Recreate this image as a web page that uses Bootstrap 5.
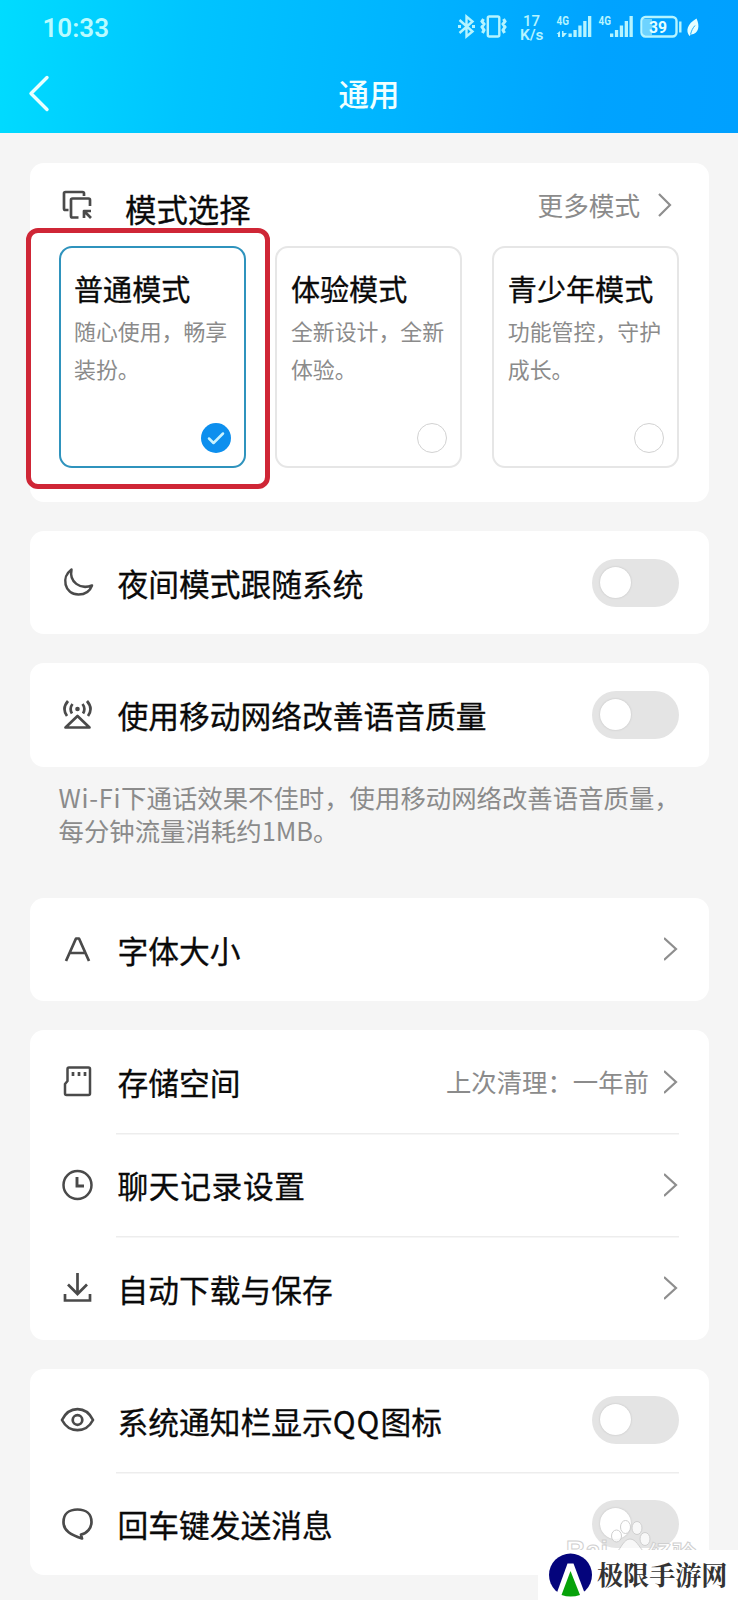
<!DOCTYPE html>
<html lang="zh-CN">
<head>
<meta charset="utf-8">
<meta name="viewport" content="width=device-width, initial-scale=1">
<title>通用</title>
<link href="https://cdn.jsdelivr.net/npm/bootstrap@5.3.0/dist/css/bootstrap.min.css" rel="stylesheet">
<style>
  body { font-family: "Noto Sans CJK SC", sans-serif; background: #f5f5f5; color: #0a0a0a; width: 738px; height: 1600px; overflow: hidden; position: relative; }
  svg { display: block; flex: none; }
  .app-head { height: 133px; background: linear-gradient(97deg, #00dcff 0%, #00c4ff 26%, #00b4ff 54%, #00a3ff 80%, #00a0ff 100%); color: #f0ffff; }
  .status-line { height: 54px; padding-left: 42.5px; padding-right: 37px; }
  .clock { font: 600 26px/54px Roboto, sans-serif; color: #b9fbff; padding-top: 1px; }
  .title-line { height: 79px; display: grid; grid-template-columns: 80px 1fr 80px; align-items: center; }
  .title-line h1 { font-size: 30.5px; line-height: 40px; font-weight: 500; margin: 0; padding-bottom: 2px; }
  .page-body { padding: 30px 29px 0 29.5px; }
  .panel { background: #fff; border: 0; border-radius: 14px; margin-bottom: 29px; padding: 0 30px 0 32px; }
  .line-item { height: 103.3px; gap: 22px; }
  .line-item .body-part { height: 100%; flex: 1; display: flex; align-items: center; font-size: 30.75px; line-height: 40px; }
  .line-item + .line-item .body-part { box-shadow: inset 0 1.5px 0 #ededed; }
  .body-part > .lbl { padding-left: 2px; padding-top: 1px; white-space: nowrap; -webkit-text-stroke: .3px; }
  .lbl.roomy { letter-spacing: .6px; }
  .hint { color: #8b8b8b; font-size: 25.4px; line-height: 33.5px; }
  .go { margin-right: 1px; }
  .toggle { width: 87px; height: 48px; border-radius: 24px; background: #e4e4e4; padding: 8px; flex: none; }
  .toggle::before { content: ""; display: block; width: 31px; height: 31px; border-radius: 50%; background: #fff; box-shadow: 0 0 2px #bbb; }
  .modes-panel { height: 339px; }
  .modes-head { height: 83px; }
  .modes-head .ttl { font-size: 31.4px; line-height: 40px; margin-left: 32.5px; padding-top: 8px; -webkit-text-stroke: .3px; }
  .modes-head .more { font-size: 25.6px; line-height: 40px; color: #8b8b8b; margin-right: 18px; padding-top: 1px; }
  .mode-grid { display: grid; grid-template-columns: repeat(3, 187px); column-gap: 29.9px; margin-left: -3px; }
  .mode-box { height: 222px; border: 2.5px solid #e6e6e6; border-radius: 13px; padding: 20px 13px 13.5px 13.5px; position: relative; }
  .mode-box h2 { font-size: 29.1px; line-height: 40px; margin: 0 0 4px; font-weight: 400; white-space: nowrap; -webkit-text-stroke: .3px; }
  .mode-box p { font-size: 21.9px; line-height: 38.4px; color: #8b8b8b; margin: 0; white-space: nowrap; }
  .pick { width: 30px; height: 30px; border: 1.5px solid #d2d2d2; border-radius: 50%; align-self: flex-end; margin-top: auto; display: block; }
  .mode-box.on { border: 2.5px solid #2f93bd; }
  .mode-box.on .pick { border: 0; background: #0d8fee; }
  .marker { position: absolute; left: 25.5px; top: 228px; width: 244px; height: 261px; border: 5px solid #cf2636; border-radius: 12px; }
  .ghost { position: absolute; left: 560px; top: 1512px; }
  .stamp { position: absolute; right: 0; bottom: 0; width: 200px; height: 50px; background: #fff; padding-left: 10px; }
  .stamp span { font-family: "Noto Serif CJK SC", "Noto Sans CJK SC", serif; font-weight: 700; font-size: 26.1px; line-height: 46px; color: #333; margin-left: 4px; padding-bottom: 2px; white-space: nowrap; }
</style>
</head>
<body>
<header class="app-head">
  <div class="status-line d-flex align-items-center justify-content-between">
    <span class="clock">10:33</span>
    <svg width="246" height="32" viewBox="455 10 246 32" fill="none" stroke="#b5f4ff" stroke-width="2.400" font-family="Roboto, sans-serif">
      <path d="M459.500 19 L472.500 30.500 L466.500 35.500 V15.500 L472.500 20.500 L459.500 32"/>
      <path d="M458 25.500h3M472 25.500h3" stroke-width="3"/>
      <rect x="487.800" y="15.500" width="11.500" height="20" rx="1.500"/>
      <path d="M483.500 18l-1.500 2.500 2 2.500-2 3 2 3-1.500 3M503.500 18l1.500 2.500-2 2.500 2 3-2 3 1.500 3" stroke-width="3"/>
      <rect x="643" y="18" width="9" height="16" fill="#b5f4ff" fill-opacity=".6" stroke="none"/>
      <rect x="641.500" y="16" width="35" height="19.500" rx="4"/>
      <path d="M680.300 20.500v11"/>
      <g fill="#b5f4ff" stroke="none">
        <text x="523" y="24.600" font-size="15.500" font-weight="500" textLength="17" lengthAdjust="spacingAndGlyphs">17</text>
        <text x="520" y="38.500" font-size="15" font-weight="600" textLength="23.500" lengthAdjust="spacingAndGlyphs">K/s</text>
        <text x="556.500" y="24" font-size="12.500" font-weight="700" textLength="12.500" lengthAdjust="spacingAndGlyphs">4G</text>
        <text x="598.500" y="24" font-size="12.500" font-weight="700" textLength="12.500" lengthAdjust="spacingAndGlyphs">4G</text>
        <path d="M568.500 32.500h3.300v3.500h-3.300zM573.400 29h3.300v7h-3.300zM578.300 24.500h3.300v11.500h-3.300zM583.200 20h3.300v16h-3.300zM588 15h3.300v21h-3.300z"/>
        <path d="M610 32.500h3.300v3.500h-3.300zM614.900 29h3.300v7h-3.300zM619.800 24.500h3.300v11.500h-3.300zM624.700 20h3.300v16h-3.300zM629.500 15h3.300v21h-3.300z"/>
        <path d="M556.500 33l3.500-3v6h-2v-3zM562 30h1.500v2h3.500l-3.500 4h-1.500z"/>
        <text x="649" y="31.500" font-size="16" font-weight="700" fill="#e5ffff" textLength="18" lengthAdjust="spacingAndGlyphs">39</text>
        <path d="M696.500 17.500c3.500 7 2.500 15.500-5.500 16l-1.500 1.500c-4-5-2.500-12 7-17.500z" fill="#e5ffff"/>
      </g>
      <path d="M690.500 33.500c1-4 2-6 4.500-9" stroke="#21adfb" stroke-width="1"/>
    </svg>
  </div>
  <div class="title-line text-center">
    <svg width="28" height="40" viewBox="0 0 28 40" style="margin-left:27px" fill="none" stroke="#e8ffff" stroke-width="3.400" stroke-linecap="round" stroke-linejoin="round"><path d="M20 3.500 4 19.500l16 16"/></svg>
    <h1>通用</h1>
  </div>
</header>

<main class="page-body">
  <section class="card panel modes-panel">
    <div class="modes-head d-flex align-items-center">
      <svg width="31" height="30" viewBox="0 0 31 30" fill="none" stroke="#4a4a4a" stroke-width="2.700" stroke-linejoin="round"><path d="M6.500 20H3.500Q2 20 2 18.500V3.500Q2 2 3.500 2H20.500Q22 2 22 3.500V6"/><path d="M16.500 27.500H10.500Q9 27.500 9 26V10Q9 8.500 10.500 8.500H26.500Q28 8.500 28 10V16"/><path d="M22 28v-7h7M22.500 21.500l6.500 6.500"/></svg>
      <span class="ttl">模式选择</span>
      <span class="more ms-auto">更多模式</span>
      <svg width="14" height="24" viewBox="0 0 14 24" style="margin-right:7px" fill="none" stroke="#8e8e8e" stroke-width="2.200"><path d="M1 1l11 11L1 23"/></svg>
    </div>
    <div class="mode-grid">
      <article class="mode-box on d-flex flex-column"><h2>普通模式</h2><p>随心使用，畅享<br>装扮。</p>
        <span class="pick"><svg width="30" height="30" viewBox="0 0 30 30" fill="none" stroke="#c9f3ff" stroke-width="2.500" stroke-linecap="round" stroke-linejoin="round"><path d="M8 15.500l4.500 4.500L22 10.500"/></svg></span></article>
      <article class="mode-box d-flex flex-column"><h2>体验模式</h2><p>全新设计，全新<br>体验。</p><span class="pick"></span></article>
      <article class="mode-box d-flex flex-column"><h2>青少年模式</h2><p>功能管控，守护<br>成长。</p><span class="pick"></span></article>
    </div>
  </section>

  <section class="card panel">
    <div class="line-item d-flex align-items-center">
      <svg width="32" height="34" viewBox="0 0 32 34" fill="none" stroke="#4a4a4a" stroke-width="2.500" stroke-linejoin="round"><path d="M9.500 3.500C-1 11 2 28 16.500 28.500 23 28.500 28 25 30 19.500 18 24 7 16 9.500 3.500z"/></svg>
      <div class="body-part"><span class="lbl">夜间模式跟随系统</span><span class="toggle ms-auto"></span></div>
    </div>
  </section>

  <section class="card panel mb-0">
    <div class="line-item d-flex align-items-center">
      <svg width="32" height="34" viewBox="0 0 32 34" fill="none" stroke="#4a4a4a" stroke-width="2.700" stroke-linejoin="round"><path d="M15.500 18L3.500 29.500h24z"/><circle cx="15.500" cy="11" r="2.300" fill="#4a4a4a" stroke="none"/><path d="M6 3Q-0.500 10.500 5 18M25 3q6.500 7.500 1 15M10.500 6Q7 10.500 10 15.500M20.500 6q3.500 4.500.5 9.500"/></svg>
      <div class="body-part"><span class="lbl">使用移动网络改善语音质量</span><span class="toggle ms-auto"></span></div>
    </div>
  </section>
  <p class="hint mb-0 text-nowrap" style="height:131px;padding:14px 0 0 29px"><span style="letter-spacing:.7px">Wi-Fi</span>下通话效果不佳时，使用移动网络改善语音质量，<br>每分钟流量消耗约1MB。</p>

  <section class="card panel">
    <div class="line-item d-flex align-items-center">
      <svg width="32" height="34" viewBox="0 0 32 34" fill="none" stroke="#4a4a4a" stroke-width="2.700" stroke-linejoin="round"><path d="M4 29L14 6.500h3L27 29M7.500 21h16"/></svg>
      <div class="body-part"><span class="lbl">字体大小</span>
        <svg class="ms-auto go" width="14" height="24" viewBox="0 0 14 24" fill="none" stroke="#8e8e8e" stroke-width="2.200"><path d="M0 1l12 11L0 23"/></svg></div>
    </div>
  </section>

  <section class="card panel">
    <div class="line-item d-flex align-items-center">
      <svg width="32" height="34" viewBox="0 0 32 34" fill="none" stroke="#4a4a4a" stroke-width="2.500" stroke-linejoin="round"><path d="M5.500 4Q5.500 2.500 7 2.500H26.500Q28 2.500 28 4V28.500Q28 30 26.500 30H4.500Q3 30 3 28.500V19l2.500-3z"/><path d="M11 7v4M17 7v4M23 7v4" stroke-width="2.700"/></svg>
      <div class="body-part"><span class="lbl">存储空间</span><span class="hint ms-auto" style="margin-right:15px">上次清理：一年前</span>
        <svg class="go" width="14" height="24" viewBox="0 0 14 24" fill="none" stroke="#8e8e8e" stroke-width="2.200"><path d="M0 1l12 11L0 23"/></svg></div>
    </div>
    <div class="line-item d-flex align-items-center">
      <svg width="32" height="34" viewBox="0 0 32 34" fill="none" stroke="#4a4a4a" stroke-width="2.500"><circle cx="15.500" cy="17" r="14"/><path d="M15 9v9h7" stroke-width="2.900"/></svg>
      <div class="body-part"><span class="lbl roomy">聊天记录设置</span>
        <svg class="ms-auto go" width="14" height="24" viewBox="0 0 14 24" fill="none" stroke="#8e8e8e" stroke-width="2.200"><path d="M0 1l12 11L0 23"/></svg></div>
    </div>
    <div class="line-item d-flex align-items-center">
      <svg width="32" height="34" viewBox="0 0 32 34" fill="none" stroke="#4a4a4a" stroke-width="2.700"><path d="M15.500 2v20.500M6 13.500l9.500 9.500 9.500-9.500M3 23v6.500h25V23"/></svg>
      <div class="body-part"><span class="lbl">自动下载与保存</span>
        <svg class="ms-auto go" width="14" height="24" viewBox="0 0 14 24" fill="none" stroke="#8e8e8e" stroke-width="2.200"><path d="M0 1l12 11L0 23"/></svg></div>
    </div>
  </section>

  <section class="card panel">
    <div class="line-item d-flex align-items-center">
      <svg width="32" height="34" viewBox="0 0 32 34" overflow="visible" fill="none" stroke="#4a4a4a" stroke-width="2.700"><path d="M0 17C7 2.500 24 2.500 31 17 24 30.500 7 30.500 0 17z" stroke-linejoin="round"/><circle cx="15.500" cy="17" r="4.800"/></svg>
      <div class="body-part"><span class="lbl">系统通知栏显示<span style="letter-spacing:1px">QQ</span>图标</span><span class="toggle ms-auto"></span></div>
    </div>
    <div class="line-item d-flex align-items-center">
      <svg width="32" height="34" viewBox="0 0 32 34" fill="none" stroke="#4a4a4a" stroke-width="2.700" stroke-linejoin="round"><path d="M20 31.500C9 28 1.500 24 1.500 15 1.500 7 7 2.500 15.500 2.500S29.500 7 29.500 15C29.500 21 25 26.500 19 27.500z"/></svg>
      <div class="body-part"><span class="lbl">回车键发送消息</span><span class="toggle ms-auto"></span></div>
    </div>
  </section>
</main>

<div class="marker"></div>

<svg class="ghost" width="140" height="38" viewBox="560 1512 140 38" fill="#fff" fill-opacity=".75" stroke="#cfcfcf" stroke-width="1">
  <ellipse cx="625.500" cy="1527" rx="5" ry="6.500"/><ellipse cx="637" cy="1528" rx="5" ry="6.500"/><ellipse cx="616.500" cy="1536" rx="5" ry="6"/><ellipse cx="645" cy="1539" rx="5" ry="6.500"/>
  <path d="M617 1552c4-4 7-13 13-13s9 8 14 13z"/>
  <text x="566" y="1560" font-family="Liberation Sans, sans-serif" font-size="27" font-weight="700">Bai</text>
  <text x="648" y="1563" font-family="Noto Sans CJK SC, sans-serif" font-size="24" font-weight="700">经验</text>
</svg>

<div class="stamp d-flex align-items-center">
  <svg width="45" height="46" viewBox="0 0 45 46"><circle cx="22.500" cy="23" r="21.500" fill="#04047c"/><path d="M7 46L19.500 11.500h6L38.500 46z" fill="#fff"/><path d="M22.500 19L13.500 43Q22.500 46 32 43z" fill="#06a20a"/></svg>
  <span>极限手游网</span>
</div>
<script src="https://cdn.jsdelivr.net/npm/bootstrap@5.3.0/dist/js/bootstrap.bundle.min.js"></script>
</body>
</html>
